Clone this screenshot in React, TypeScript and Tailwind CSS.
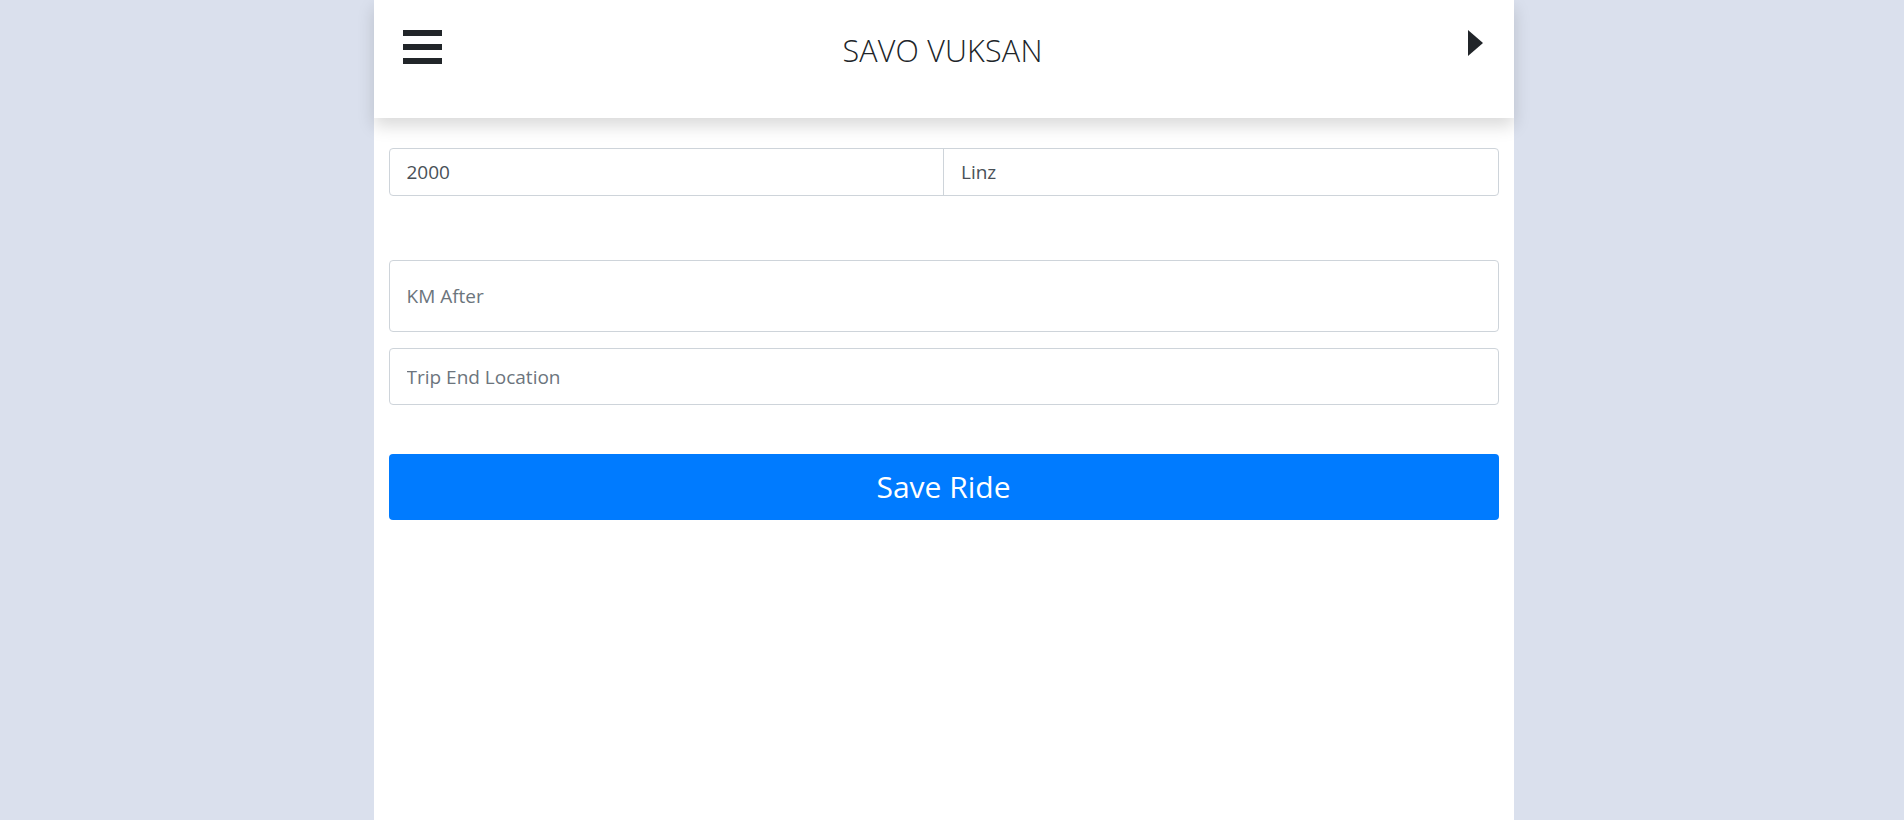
export default function App() {
  return (
    <div className="min-h-screen bg-[#dae0ed] flex justify-center pr-[17px] font-['Open_Sans','Noto_Sans',sans-serif]">
      <div className="w-[1140px] min-h-[820px] bg-white flex flex-col">
        {/* header */}
        <header className="h-[118px] bg-white shadow-[0_8px_16px_rgba(0,0,0,0.15)] relative z-10 grid grid-cols-[1fr_auto_1fr] items-start pl-[29px] pr-[31px] pt-[30px]">
          <button className="w-[39px] flex flex-col gap-[8px]">
            <span className="block h-[6px] bg-[#212529]"></span>
            <span className="block h-[6px] bg-[#212529]"></span>
            <span className="block h-[6px] bg-[#212529]"></span>
          </button>
          <h1 className="text-[30.5px] font-light text-[#212529] leading-none mt-[5px] tracking-[0.2px]">
            SAVO VUKSAN
          </h1>
          <svg width="15" height="26" viewBox="0 0 15 26" className="justify-self-end">
            <path d="M0 0 L15 13 L0 26 Z" fill="#212529" />
          </svg>
        </header>

        {/* form */}
        <div className="px-[15px] pt-[30px] flex flex-col">
          <div className="flex h-[48px] border border-[#ced4da] rounded-[4px] text-[19px] text-[#495057]">
            <div className="flex-1 flex items-center pl-[17px]">2000</div>
            <div className="flex-1 flex items-center pl-[17px] border-l border-[#ced4da]">Linz</div>
          </div>

          <input
            placeholder="KM After"
            className="mt-[64px] h-[72px] border border-[#ced4da] rounded-[4px] px-[17px] text-[19px] text-[#495057] placeholder:text-[#6c757d] outline-none"
          />
          <input
            placeholder="Trip End Location"
            className="mt-[16px] h-[57px] border border-[#ced4da] rounded-[4px] px-[17px] text-[19px] text-[#495057] placeholder:text-[#6c757d] outline-none"
          />

          <button className="mt-[49px] h-[66px] bg-[#007bff] rounded-[4px] text-white text-[30px] leading-none">
            Save Ride
          </button>
        </div>
      </div>
    </div>
  );
}
